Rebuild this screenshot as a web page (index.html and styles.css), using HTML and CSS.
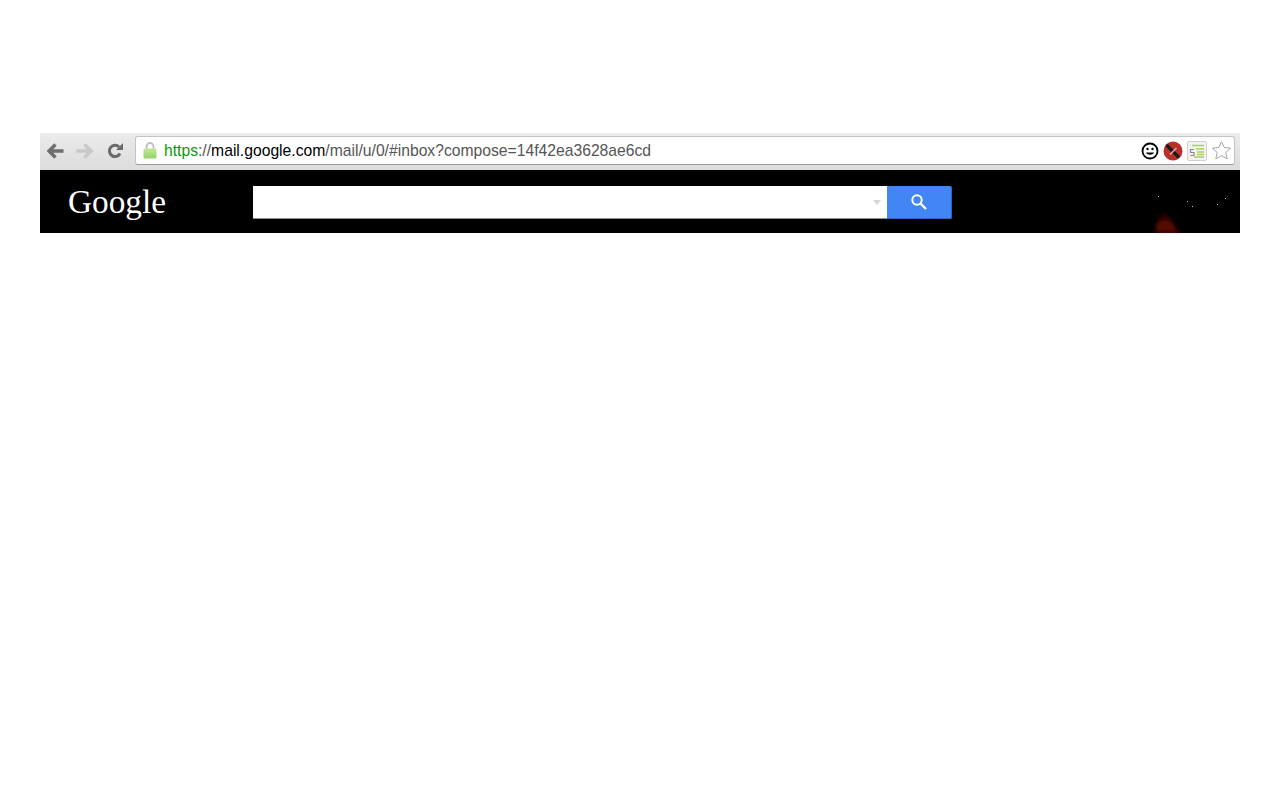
FILE: index.html
```html
<!DOCTYPE html>
<html lang="en">
<head>
    <meta charset="UTF-8">
    <title>Gmail</title>
    <link rel="stylesheet" href="styles.css">
</head>
<body>
    <div class="window">
        <div class="toolbar">
            <svg class="nav-btn" width="20" height="18" viewBox="0 0 20 18"><path d="M18.500 9H4M10.500 2.500 4 9l6.500 6.500" fill="none" stroke="#6e6e6e" stroke-width="3.400"/></svg>
            <svg class="nav-btn" width="20" height="18" viewBox="0 0 20 18"><path d="M1.500 9H16M9.500 2.500 16 9l-6.500 6.500" fill="none" stroke="#c8c8c8" stroke-width="3.400"/></svg>
            <svg class="nav-btn" width="18" height="18" viewBox="0 0 18 18"><path d="M14 11.500A5.600 5.600 0 1 1 13 5" fill="none" stroke="#6a6a6a" stroke-width="3"/><path d="M10 8h7V1z" fill="#6a6a6a"/></svg>
            <div class="omnibox">
                <svg class="lock" width="14" height="17" viewBox="0 0 14 17">
                    <defs>
                        <linearGradient id="lockBody" x1="0" y1="0" x2="0" y2="1">
                            <stop offset="0" stop-color="#c4e89c"/>
                            <stop offset="1" stop-color="#92d464"/>
                        </linearGradient>
                    </defs>
                    <path d="M3.500 7V4.500a3.500 3.500 0 0 1 7 0V7" fill="none" stroke="#bdbdbd" stroke-width="1.800"/>
                    <rect x="0.500" y="6.500" width="13" height="10" rx="1.500" fill="url(#lockBody)"/>
                </svg>
                <div class="url"><span class="scheme">https</span><span class="sep">://</span><span class="host">mail.google.com</span><span class="path">/mail/u/0/#inbox?compose=14f42ea3628ae6cd</span></div>
                <div class="ext-icons">
                    <svg width="18" height="18" viewBox="0 0 18 18">
                        <circle cx="9" cy="9" r="7.500" fill="#fff" stroke="#000" stroke-width="1.800"/>
                        <circle cx="6.500" cy="7" r="1.200"/><circle cx="11.500" cy="7" r="1.200"/>
                        <path d="M5 10.500c1 3 7 3 8 0z"/>
                    </svg>
                    <svg width="20" height="20" viewBox="0 0 20 20">
                        <circle cx="10" cy="10" r="9.500" fill="#b9302a"/>
                        <path d="M3.500 4 16 16.500" stroke="#1a1a1a" stroke-width="3.200"/>
                        <path d="M13.500 7 7 13.500" stroke="#e0a89e" stroke-width="1.600"/>
                    </svg>
                    <svg width="20" height="20" viewBox="0 0 20 20">
                        <rect x="0.500" y="0.500" width="19" height="19" rx="1.500" fill="#f2f2f2" stroke="#cfcfcf"/>
                        <path d="M5 4.500h12M9 8h8M10 11h7M10 13.500h7M7 16h10" stroke="#a6d455" stroke-width="1.400"/>
                        <path d="M7 8.500H3.500v3H7v3H3.500" fill="none" stroke="#888" stroke-width="1.100"/>
                    </svg>
                    <svg width="21" height="21" viewBox="0 0 20 20"><path d="m10 1.500 2.600 5.600 6 .7-4.500 4.100 1.300 6L10 15l-5.400 2.900 1.300-6-4.500-4.100 6-.7z" fill="#fff" stroke="#a0a0a0" stroke-width="0.900"/></svg>
                </div>
            </div>
        </div>
        <header class="gbar">
            <div class="logo">Google</div>
            <form class="search">
                <div class="search-input"><span class="caret"></span></div>
                <button type="button" class="search-btn">
                    <svg width="18" height="18" viewBox="0 0 18 18"><circle cx="7" cy="7" r="4.700" fill="none" stroke="#fff" stroke-width="2"/><path d="m10.500 10.500 5.500 5.500" stroke="#fff" stroke-width="2.400"/></svg>
                </button>
            </form>
            <svg class="theme-art" width="90" height="40" viewBox="0 0 90 40">
                <defs>
                    <filter id="soft"><feGaussianBlur stdDeviation="2"/></filter>
                    <linearGradient id="glow" x1="0" y1="0" x2="0" y2="1">
                        <stop offset="0" stop-color="#2a0403"/>
                        <stop offset="0.5" stop-color="#5a0806"/>
                        <stop offset="1" stop-color="#3c0503"/>
                    </linearGradient>
                </defs>
                <path d="M6 44 6 32 12 21 18 23 32 44z" fill="url(#glow)" filter="url(#soft)"/>
                <g fill="#bdbdbd">
                    <rect x="8" y="3" width="1" height="1"/>
                    <rect x="37" y="8" width="1" height="1"/>
                    <rect x="42" y="13" width="1" height="1"/>
                    <rect x="67" y="11" width="1" height="1"/>
                    <rect x="75" y="5" width="1" height="1"/>
                </g>
            </svg>
        </header>
    </div>
</body>
</html>
```

FILE: styles.css
```css
body { margin: 0; padding: 133px 40px 0; background: #fff; font-family: "Liberation Sans", Arial, sans-serif; }

.toolbar { height: 37px; box-sizing: border-box; padding: 3px 5px 5px 5px; display: flex; align-items: center; background: linear-gradient(#ebebeb, #dcdcdc); }
.nav-btn { flex: none; margin-right: 11px; }
.nav-btn:nth-child(1) { margin-right: 10px; }

.omnibox { flex: 1; height: 29px; box-sizing: border-box; padding: 0 2px 0 7px; display: flex; align-items: center; background: #fff; border: 1px solid #c4c4c4; border-bottom-color: #9a9a9a; border-radius: 3px; }
.lock { flex: none; margin-right: 7px; }
.url { flex: 1; font-size: 15.7px; white-space: nowrap; color: #555; }
.scheme { color: #0a9a0a; }
.host { color: #000; }

.ext-icons { display: flex; align-items: center; gap: 4px; }

.gbar { position: relative; height: 63px; padding-top: 1px; box-sizing: border-box; display: flex; align-items: center; background: #000; overflow: hidden; }
.logo { width: 213px; padding-left: 28px; box-sizing: border-box; font-family: "Liberation Serif", "Times New Roman", serif; font-size: 33.3px; color: #fff; }
.search { display: flex; height: 33px; width: 699px; }
.search-input { flex: 1; position: relative; background: #fff; border-bottom: 1px solid #8c8c8c; }
.caret { position: absolute; right: 6px; top: 14px; border: 4px solid transparent; border-top: 5px solid #d6d6d6; }
.search-btn { width: 65px; padding: 0; border: none; border-bottom: 1px solid #2f66c4; border-right: 1px solid #2f66c4; border-radius: 0 2px 2px 0; background: #4285f4; display: flex; align-items: center; justify-content: center; }
.theme-art { position: absolute; right: 0; top: 23px; }
```
